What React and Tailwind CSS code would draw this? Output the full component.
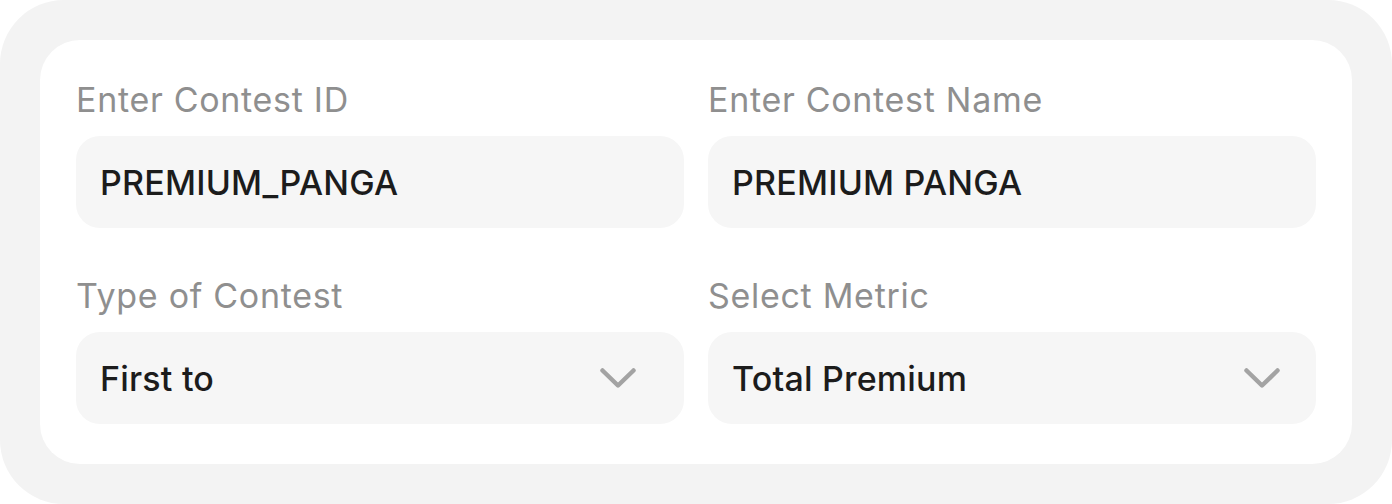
import React from "react";

const Chevron = () => (
  <svg width="36" height="21" viewBox="0 0 36 21" fill="none" className="shrink-0">
    <path d="M2.5 2.5 L18 17.5 L33.5 2.5" stroke="#a3a3a3" strokeWidth="4.5" strokeLinecap="round" strokeLinejoin="round" />
  </svg>
);

function Field({ label, value, select, wide }) {
  return (
    <div className="flex flex-col gap-4">
      <label className="text-[34px] leading-10 tracking-[0.7px] text-[#8f8f8f]">{label}</label>
      <div
        className={
          "flex h-[92px] items-center justify-between rounded-3xl bg-[#f6f6f6] pl-6 " +
          (wide ? "pr-9" : "pr-12")
        }
      >
        <span className="text-[34px] font-medium tracking-[0.2px] text-[#1c1c1c]">{value}</span>
        {select && <Chevron />}
      </div>
    </div>
  );
}

export default function App() {
  return (
    <div className="h-[504px] w-[1392px] bg-white" style={{ fontFamily: "Inter, sans-serif" }}>
      <div className="h-full w-full rounded-[64px] bg-[#f3f3f3] p-10">
        <div className="grid h-full grid-cols-2 gap-x-6 gap-y-12 rounded-[40px] bg-white px-9 pt-10 pb-10">
          <Field label="Enter Contest ID" value="PREMIUM_PANGA" />
          <Field label="Enter Contest Name" value="PREMIUM PANGA" />
          <Field label="Type of Contest" value="First to" select />
          <Field label="Select Metric" value="Total Premium" select wide />
        </div>
      </div>
    </div>
  );
}
